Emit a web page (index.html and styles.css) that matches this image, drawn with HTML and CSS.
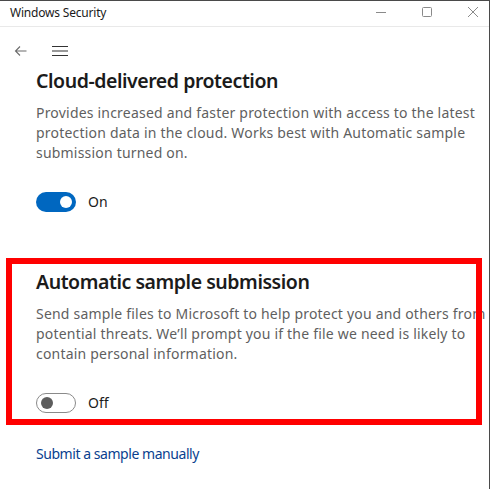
FILE: index.html
```html
<!DOCTYPE html>
<html lang="en">
<head>
<meta charset="utf-8">
<title>Windows Security</title>
<link rel="stylesheet" href="styles.css">
</head>
<body>
<div class="window">
  <header class="titlebar">
    <span class="title">Windows Security</span>
    <div class="controls">
      <span class="ctl"><svg width="10" height="10" viewBox="0 0 10 10"><path d="M0 5.5h10" stroke="#8a8a8a" stroke-width="1" fill="none"/></svg></span>
      <span class="ctl"><svg width="10" height="10" viewBox="0 0 10 10"><rect x="0.5" y="0.5" width="9" height="9" rx="1" stroke="#8a8a8a" stroke-width="1" fill="none"/></svg></span>
      <span class="ctl"><svg width="10" height="10" viewBox="0 0 10 10"><path d="M0 0l10 10M10 0L0 10" stroke="#8a8a8a" stroke-width="1" fill="none"/></svg></span>
    </div>
  </header>
  <nav class="navbar">
    <span class="nav-btn"><svg width="13" height="12" viewBox="0 0 13 12"><path d="M12.5 6H1.5M6 1.5L1.5 6 6 10.5" stroke="#6b6b6b" stroke-width="1.1" fill="none"/></svg></span>
    <span class="nav-btn"><svg width="16" height="12" viewBox="0 0 16 12"><path d="M0 1.5h16M0 6h16M0 10.5h16" stroke="#333" stroke-width="1.1" fill="none"/></svg></span>
  </nav>
  <main class="content">
    <section class="setting">
      <h2 class="setting-title">Cloud-delivered protection</h2>
      <p class="setting-desc">Provides increased and faster protection with access to the latest<br>protection data in the cloud. Works best with Automatic sample<br>submission turned on.</p>
      <div class="toggle-row"><span class="toggle toggle-on"><span class="knob"></span></span><span class="toggle-label">On</span></div>
    </section>
    <section class="setting setting-second">
      <h2 class="setting-title">Automatic sample submission</h2>
      <p class="setting-desc">Send sample files to Microsoft to help protect you and others from<br>potential threats. We’ll prompt you if the file we need is likely to<br>contain personal information.</p>
      <div class="toggle-row"><span class="toggle toggle-off"><span class="knob"></span></span><span class="toggle-label">Off</span></div>
      <div class="highlight"></div>
    </section>
    <a class="manual-link" href="#">Submit a sample manually</a>
  </main>
</div>
</body>
</html>
```
FILE: styles.css
```css
* { box-sizing: border-box; }
html, body { margin: 0; padding: 0; background: #ffffff; }
body {
  width: 490px;
  height: 489px;
  overflow: hidden;
  font-family: "Noto Sans", "Open Sans", sans-serif;
}
.window {
  width: 490px;
  height: 489px;
  border-top: 1px solid #4a4a4a;
  border-right: 1px solid #4a4a4a;
  background: #ffffff;
  overflow: hidden;
  position: relative;
}
.titlebar {
  height: 26px;
  border-bottom: 1px solid #e9e9e9;
  display: flex;
  align-items: center;
  justify-content: space-between;
  padding-left: 10px;
  padding-bottom: 3px;
}
.title {
  font-size: 12px;
  color: #1a1a1a;
  letter-spacing: -0.2px;
}
.controls { display: flex; height: 100%; margin-right: -7px; }
.ctl {
  width: 46px;
  display: flex;
  align-items: center;
  justify-content: center;
}
.navbar {
  height: 40px;
  display: flex;
  align-items: center;
  gap: 25px;
  padding-left: 14px;
  padding-top: 8px;
}
.nav-btn { display: flex; align-items: center; }
.content {
  padding-left: 36px;
}
.setting { position: relative; }
.setting-title {
  margin: 0;
  font-size: 19.5px;
  line-height: 28px;
  font-weight: 600;
  color: #1b1b1b;
  letter-spacing: -0.45px;
}
.setting-desc {
  margin: 8px 0 0;
  font-size: 14px;
  line-height: 20px;
  color: #5f5f5f;
  white-space: nowrap;
  letter-spacing: 0.2px;
}
.toggle-row {
  margin-top: 29px;
  display: flex;
  align-items: center;
  gap: 12px;
  height: 20px;
}
.toggle {
  width: 40px;
  height: 20px;
  border-radius: 10px;
  display: flex;
  align-items: center;
}
.toggle-on {
  background: #0067c0;
  justify-content: flex-end;
  padding-right: 4px;
}
.toggle-on .knob {
  width: 12px; height: 12px; border-radius: 50%; background: #ffffff;
}
.toggle-off {
  border: 1px solid #8a8a8a;
  padding-left: 4px;
}
.toggle-off .knob {
  width: 12px; height: 12px; border-radius: 50%; background: #5d5d5d;
}
.toggle-label {
  font-size: 14px;
  line-height: 20px;
  color: #1b1b1b;
}
.setting-second { margin-top: 56px; }
.highlight {
  position: absolute;
  left: -30px;
  top: -10px;
  width: 476px;
  height: 167px;
  border: 6px solid #ff0000;
  pointer-events: none;
}
.manual-link {
  display: block;
  margin-top: 31px;
  font-size: 14px;
  line-height: 20px;
  color: #0a3f8f;
  text-decoration: none;
  letter-spacing: -0.45px;
}
```
